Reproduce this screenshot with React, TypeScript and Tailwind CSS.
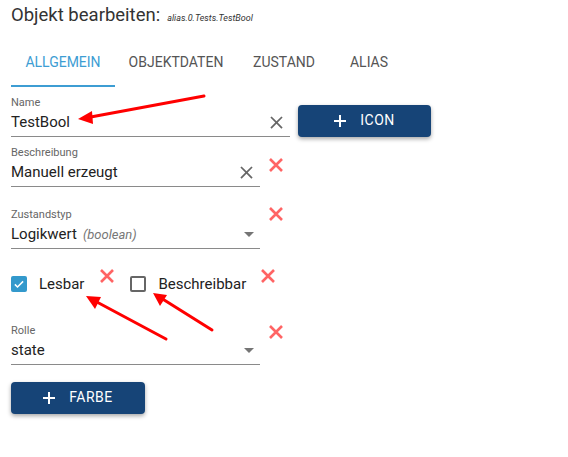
import React from 'react';

const font = { fontFamily: 'Roboto, "Liberation Sans", sans-serif' };

function ClearIcon({ className = '' }: { className?: string }) {
  return (
    <svg viewBox="0 0 24 24" className={className} fill="currentColor">
      <path d="M19 6.41 17.59 5 12 10.59 6.41 5 5 6.41 10.59 12 5 17.59 6.41 19 12 13.41 17.59 19 19 17.59 13.41 12z" />
    </svg>
  );
}

function RedX({ className = '' }: { className?: string }) {
  return (
    <svg viewBox="0 0 16 16" className={`w-[16px] h-[16px] text-[#ff6464] ${className}`}>
      <path d="M2 2 L14 14 M14 2 L2 14" stroke="currentColor" strokeWidth="2.6" />
    </svg>
  );
}

function Caret() {
  return (
    <svg viewBox="0 0 10 5" className="w-[10px] h-[5px] text-[#757575] mr-[3px]">
      <path d="M0 0 L10 0 L5 5z" fill="currentColor" />
    </svg>
  );
}

function TextField({
  label,
  value,
  width,
  children,
}: {
  label: string;
  value: React.ReactNode;
  width: string;
  children?: React.ReactNode;
}) {
  return (
    <div className={width}>
      <div className="text-[11px] leading-[13px] text-[#666]">{label}</div>
      <div className="flex items-center h-[28px] border-b border-[#8a8a8a] pr-[3px]">
        <div className="flex-1 text-[15px] text-[#222]">{value}</div>
        {children}
      </div>
    </div>
  );
}

function Checkbox({ checked, label }: { checked: boolean; label: string }) {
  return (
    <div className="flex items-center">
      {checked ? (
        <div className="w-[16px] h-[16px] rounded-[2px] bg-[#3399cc] flex items-center justify-center">
          <svg viewBox="0 0 16 16" className="w-[12px] h-[12px]">
            <path d="M2.5 8.5 L6 12 L13.5 4.5" stroke="white" strokeWidth="2" fill="none" />
          </svg>
        </div>
      ) : (
        <div className="w-[16px] h-[16px] rounded-[2px] border-2 border-[#666]" />
      )}
      <span className="ml-[12px] text-[15px] text-[#222]">{label}</span>
    </div>
  );
}

function PlusButton({ label, className }: { label: string; className: string }) {
  return (
    <div
      className={`flex items-center justify-center gap-[14px] rounded-[4px] bg-[#164477] text-white text-[14px] tracking-[0.5px] shadow-[0_2px_4px_rgba(0,0,0,0.35)] ${className}`}
    >
      <svg viewBox="0 0 12 12" className="w-[12px] h-[12px]">
        <path d="M6 0 V12 M0 6 H12" stroke="white" strokeWidth="2" />
      </svg>
      <span>{label}</span>
    </div>
  );
}

const tabs = [
  { label: 'ALLGEMEIN', w: 'w-[104px]' },
  { label: 'OBJEKTDATEN', w: 'w-[122px]' },
  { label: 'ZUSTAND', w: 'w-[94px]' },
  { label: 'ALIAS', w: 'w-[76px]' },
];

export default function App() {
  return (
    <div className="relative w-[568px] h-[457px] bg-white overflow-hidden" style={font}>
      <div className="pl-[11px] pt-[2px] flex items-baseline">
        <span className="text-[18.5px] text-[#333]">Objekt bearbeiten:</span>
        <span className="ml-[7px] text-[9px] italic text-[#333]">alias.0.Tests.TestBool</span>
      </div>

      <div className="flex ml-[11px] mt-[9px] h-[48px]">
        {tabs.map((t, i) => (
          <div
            key={t.label}
            className={`relative ${t.w} flex items-center justify-center text-[14px] ${
              i === 0 ? 'text-[#3d9dd3]' : 'text-[#555]'
            }`}
          >
            {t.label}
            {i === 0 && <div className="absolute left-0 right-0 bottom-0 h-[2px] bg-[#3d9dd3]" />}
          </div>
        ))}
      </div>

      <div className="pl-[11px] mt-[9px]">
        <div className="flex items-start">
          <TextField label="Name" value="TestBool" width="w-[279px]">
            <ClearIcon className="w-[21px] h-[21px] text-[#666]" />
          </TextField>
          <PlusButton label="ICON" className="ml-[8px] mt-[9px] w-[133px] h-[32px]" />
        </div>

        <div className="flex items-start mt-[9px]">
          <TextField label="Beschreibung" value="Manuell erzeugt" width="w-[249px]">
            <ClearIcon className="w-[21px] h-[21px] text-[#666]" />
          </TextField>
          <RedX className="ml-[8px] mt-[11px]" />
        </div>

        <div className="flex items-start mt-[21px]">
          <TextField
            label="Zustandstyp"
            value={
              <span>
                Logikwert<span className="ml-[6px] text-[13px] italic text-[#777]">(boolean)</span>
              </span>
            }
            width="w-[249px]"
          >
            <Caret />
          </TextField>
          <RedX className="ml-[8px] -mt-[2px]" />
        </div>

        <div className="flex items-start mt-[14px] h-[30px]">
          <div className="mt-[10px]">
            <Checkbox checked label="Lesbar" />
          </div>
          <RedX className="ml-[15px] mt-[5px]" />
          <div className="ml-[15px] mt-[10px]">
            <Checkbox checked={false} label="Beschreibbar" />
          </div>
          <RedX className="ml-[14px] mt-[5px]" />
        </div>

        <div className="flex items-start mt-[31px]">
          <TextField label="Rolle" value="state" width="w-[249px]">
            <Caret />
          </TextField>
          <RedX className="ml-[8px] mt-[0px]" />
        </div>

        <PlusButton label="FARBE" className="mt-[17px] w-[134px] h-[32px]" />
      </div>

      <svg className="absolute inset-0 pointer-events-none" width="568" height="457" viewBox="0 0 568 457">
        <g stroke="#ff0000" strokeWidth="3" strokeLinecap="round" fill="#ff0000">
          <line x1="204" y1="96" x2="88" y2="117.5" />
          <polygon points="78,119 92,111 93,124" stroke="none" />
          <line x1="166" y1="339" x2="95" y2="301" />
          <polygon points="86,296 101,297 95,309" stroke="none" />
          <line x1="212" y1="330" x2="161" y2="298" />
          <polygon points="153,293 167,295 160,306" stroke="none" />
        </g>
      </svg>
    </div>
  );
}
